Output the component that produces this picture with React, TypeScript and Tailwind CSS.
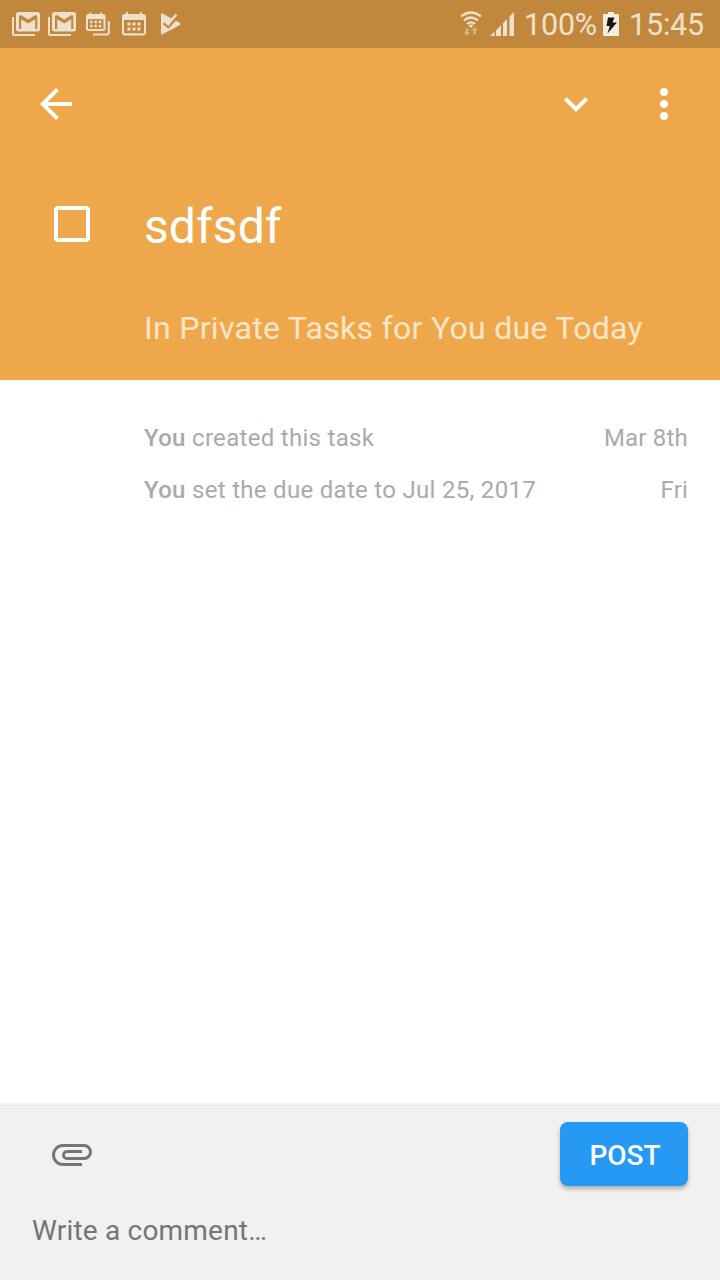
import type { ReactNode } from "react";

const cream = "#efe0cc";
const barBg = "#c1883d";

function Gmail() {
  return (
    <svg width="28" height="24" viewBox="0 0 28 24" fill="none">
      <path d="M1 5V21.5Q1 23 2.5 23H23" stroke={cream} strokeWidth="2" />
      <rect x="4" y="0" width="24" height="19.5" rx="2.5" fill={cream} />
      <path d="M7 17V4.5Q7 3 8.6 3L16.2 7.6L23.6 3Q25.3 3 25.3 4.5V17H23.2V7.2L16.2 11.6L9.2 7.2V17Z" fill={barBg} />
    </svg>
  );
}

function CalendarStack() {
  return (
    <svg width="24" height="24" viewBox="0 0 24 24" fill="none">
      <path d="M22.8 9V20.5Q22.8 22.5 20.8 22.5H7" stroke={cream} strokeWidth="2" />
      <path d="M2.5 2H3.5V0.5H5.5V2H14V0.5H16V2H17Q19.5 2 19.5 4.5V16.5Q19.5 19 17 19H2.5Q0 19 0 16.5V4.5Q0 2 2.5 2Z" fill={cream} />
      <path d="M2 7.2H17.5V17H2Z" fill={barBg} />
      <path d="M4 8.8h2.6v2.5H4zM8.4 8.8h2.6v2.5H8.4zM12.8 8.8h2.6v2.5h-2.6zM4 12.8h2.6v2.5H4zM8.4 12.8h2.6v2.5H8.4zM12.8 12.8h2.6v2.5h-2.6z" fill={cream} />
    </svg>
  );
}

function Calendar() {
  return (
    <svg width="24" height="24" viewBox="0 0 24 24" fill="none">
      <path d="M3 2H4V0H6V2H18V0H20V2H21Q24 2 24 5V20.5Q24 23.5 21 23.5H3Q0 23.5 0 20.5V5Q0 2 3 2Z" fill={cream} />
      <path d="M2 8H22V21.3H2Z" fill={barBg} />
      <path d="M5.5 10.5h3v3h-3zM10.5 10.5h3v3h-3zM15.5 10.5h3v3h-3zM5.5 15.5h3v3h-3zM10.5 15.5h3v3h-3zM15.5 15.5h3v3h-3z" fill={cream} />
    </svg>
  );
}

function PlayCheck() {
  return (
    <svg width="21" height="24" viewBox="0 0 21 24" fill="none">
      <path d="M2 1.2Q1 1 1 2V21.5Q1 23 2.5 22.3L20 13Q21 12 20 11Z" fill={cream} />
      <path d="M4 10.8L8.2 14.2L17.5 4" stroke={barBg} strokeWidth="3.8" />
      <path d="M4.8 9.2L8.2 12.3L16.3 2.5" stroke={cream} strokeWidth="2.4" />
    </svg>
  );
}

function Wifi() {
  return (
    <svg width="22" height="26" viewBox="0 0 22 26" fill="none">
      <path d="M1 5.5Q11-2.5 21 5.5M4 9.3Q11 3.7 18 9.3M7 12.9Q11 9.8 15 12.9" stroke={cream} strokeWidth="2.2" />
      <path d="M8.4 14.3Q11 12.6 13.6 14.3L11 17Z" fill={cream} />
      <path d="M5.5 17.5h2.8v3.7h2L6.9 25 3.5 21.2h2zM13.2 23.3h2.8v-3.7h2L14.6 16l-3.4 3.6h2z" fill="#d9b27e" />
    </svg>
  );
}

function Signal() {
  return (
    <svg width="24" height="24" viewBox="0 0 24 24">
      <path d="M0 24L4.5 19.8V24ZM6 18.3L11 13.2V24H6ZM13 11.2L17 7V24H13ZM19.5 4.6L24 0V24H19.5Z" fill={cream} />
    </svg>
  );
}

function Battery() {
  return (
    <svg width="16" height="24" viewBox="0 0 16 24">
      <path d="M5 0H11V2H16V24H0V2H5Z" fill="#f5ecdf" />
      <path d="M5 5.5H11.5L9.5 10.5H14L4.5 21.5L6.8 14H3.5Z" fill="#151515" />
    </svg>
  );
}

function Icon({ d }: { d: string }) {
  return (
    <svg width="48" height="48" viewBox="0 0 24 24" fill="#fff" className="shrink-0">
      <path d={d} />
    </svg>
  );
}

function Activity({ children, when }: { children: ReactNode; when: string }) {
  return (
    <div className="flex h-[52px] items-center justify-between pr-8 pl-36 text-2xl tracking-[0.3px] text-[#aaaaaa]">
      <p>
        <span className="font-medium">You</span> {children}
      </p>
      <span className="tracking-[0.2px]">{when}</span>
    </div>
  );
}

export default function App() {
  return (
    <div className="flex h-[1280px] w-[720px] flex-col overflow-hidden bg-white font-[Roboto,sans-serif]">
      <div className="flex h-12 shrink-0 items-center bg-[#c1883d] pr-4 pl-3">
        <div className="flex items-center">
          <Gmail />
          <span className="ml-2"><Gmail /></span>
          <span className="ml-[10px]"><CalendarStack /></span>
          <span className="ml-3"><Calendar /></span>
          <span className="ml-[14px]"><PlayCheck /></span>
        </div>
        <div className="ml-auto flex items-center text-[#efe0cc]">
          <Wifi />
          <span className="ml-2"><Signal /></span>
          <span className="ml-[10px] w-[73px] pt-0.5 text-[30.5px] leading-[46px] tracking-[-0.2px] whitespace-nowrap">100%</span>
          <span className="ml-[6px]"><Battery /></span>
          <span className="ml-[10px] w-[75px] pt-0.5 text-[30.5px] leading-[46px] tracking-[-0.2px] whitespace-nowrap">15:45</span>
        </div>
      </div>

      <header className="flex h-[332px] shrink-0 flex-col bg-[#eea84b] text-white">
        <div className="flex h-28 items-center pr-8 pl-8">
          <button aria-label="Back">
            <Icon d="M20 11H7.83l5.59-5.59L12 4l-8 8 8 8 1.41-1.41L7.83 13H20v-2z" />
          </button>
          <button aria-label="Collapse" className="mr-10 ml-auto">
            <Icon d="M16.59 8.59L12 13.17 7.41 8.59 6 10l6 6 6-6z" />
          </button>
          <button aria-label="More">
            <Icon d="M12 8a2 2 0 1 0 0-4 2 2 0 0 0 0 4zm0 2a2 2 0 1 0 0 4 2 2 0 0 0 0-4zm0 6a2 2 0 1 0 0 4 2 2 0 0 0 0-4z" />
          </button>
        </div>
        <div className="flex h-[128px] items-center pl-12">
          <Icon d="M19 5v14H5V5h14m0-2H5c-1.1 0-2 .9-2 2v14c0 1.1.9 2 2 2h14c1.1 0 2-.9 2-2V5c0-1.1-.9-2-2-2z" />
          <h1 className="ml-12 pt-1.5 text-5xl leading-[56px] tracking-[0.1px]">sdfsdf</h1>
        </div>
        <p className="mt-5 pl-36 text-[32px] leading-10 tracking-[0.3px] whitespace-nowrap text-[#fae5c9]">
          In Private Tasks for You due Today
        </p>
      </header>

      <main className="flex-1 pt-8">
        <Activity when="Mar 8th">created this task</Activity>
        <Activity when="Fri">set the due date to Jul 25, 2017</Activity>
      </main>

      <footer className="flex h-[177px] shrink-0 flex-col border-t-2 border-[#f5f5f5] bg-[#f1f1f1] pt-[17px] pr-8 pl-8 shadow-[inset_0_1px_0_#e8e8e8]">
        <div className="flex h-16 items-center justify-between">
          <button aria-label="Attach" className="ml-4">
            <svg width="48" height="48" viewBox="0 0 24 24" fill="none" stroke="#757575" strokeWidth="1.5">
              <path d="M17 17.25H7.5A4.75 4.75 0 0 1 7.5 7.75H18A3.25 3.25 0 0 1 18 14.25H9.5A1.75 1.75 0 0 1 9.5 10.75H17" />
            </svg>
          </button>
          <button className="h-16 w-32 rounded-lg bg-[#2599f4] pt-1 pl-0.5 text-[28px] font-medium text-white shadow-[0_3px_4px_rgba(0,0,0,0.28)]">
            POST
          </button>
        </div>
        <p className="mt-[25px] text-[28px] leading-10 tracking-[0.2px] text-[#757575]">Write a comment…</p>
      </footer>
    </div>
  );
}
